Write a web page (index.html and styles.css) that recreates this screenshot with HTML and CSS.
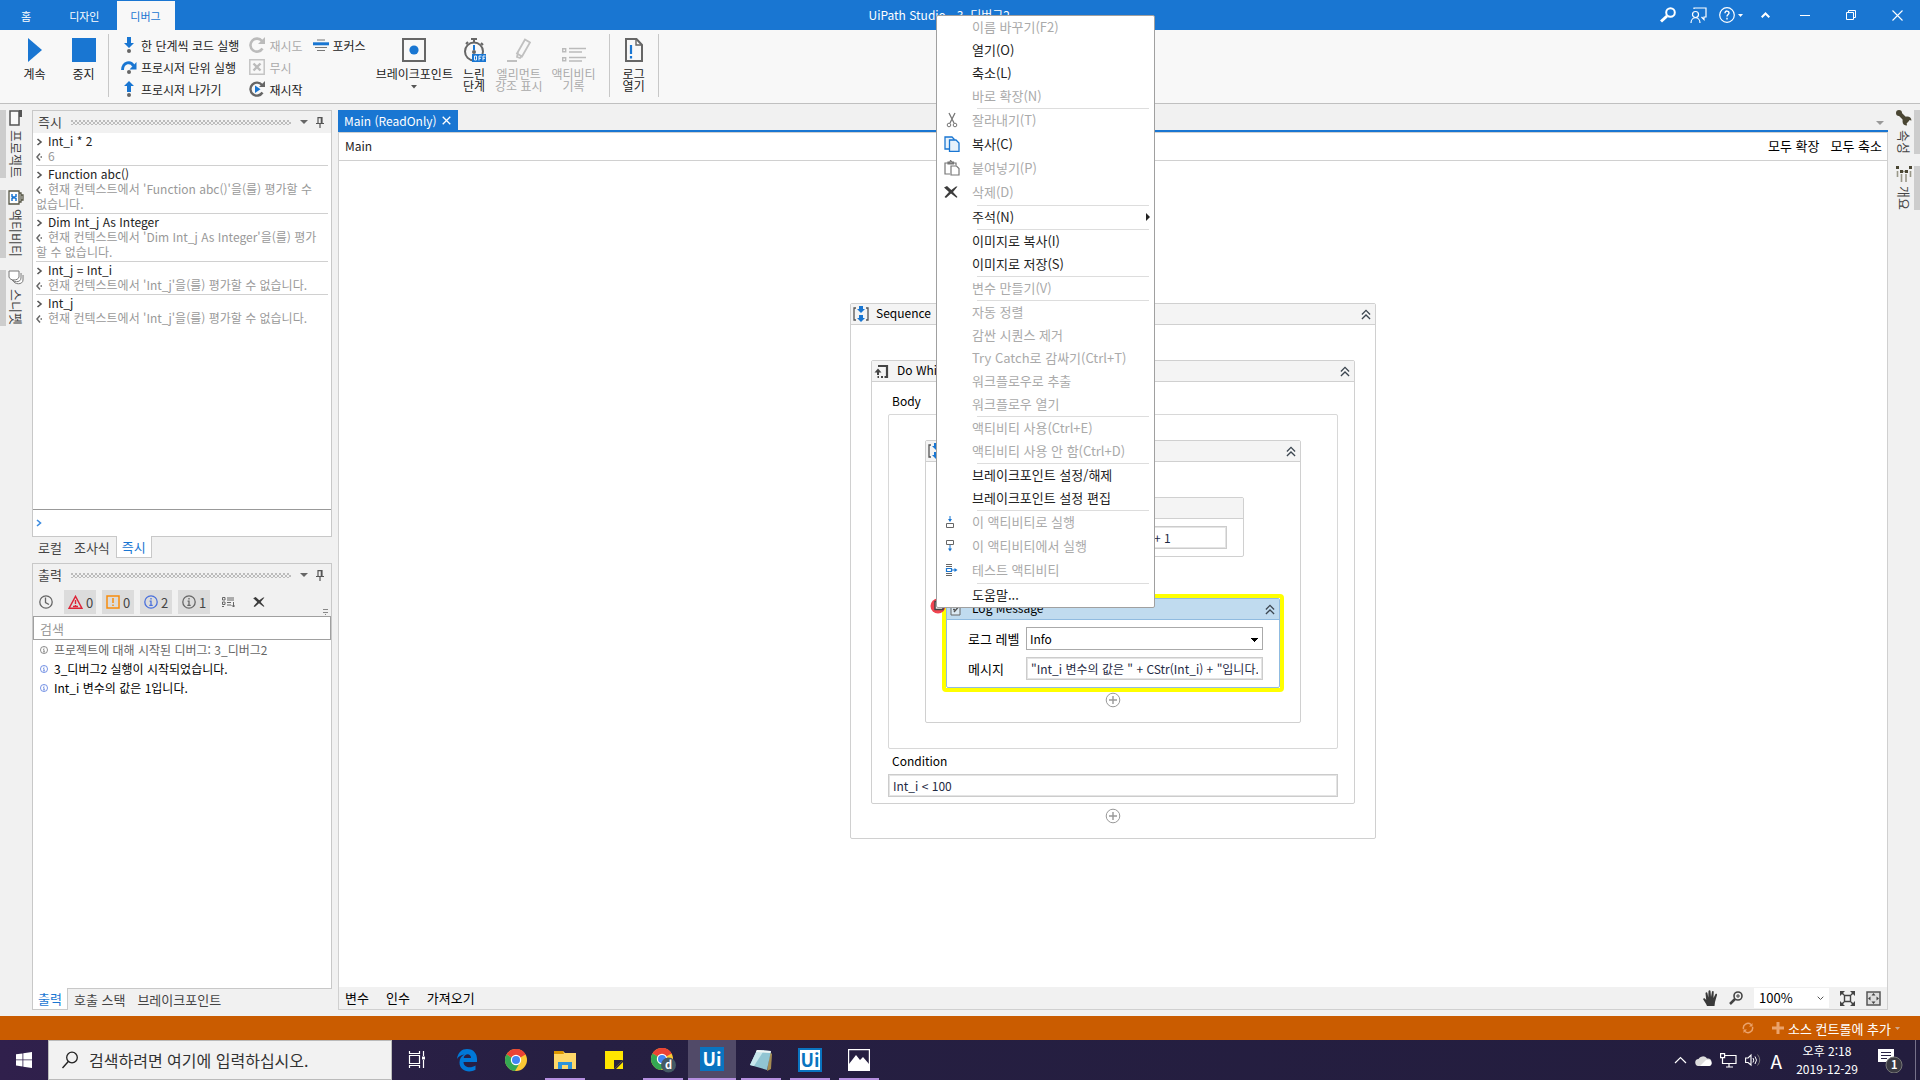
FILE: index.html
```html
<!DOCTYPE html>
<html lang="ko">
<head>
    <meta charset="UTF-8">
    <meta name="viewport" content="width=device-width, initial-scale=1.0">
    <title>UiPath Studio - 3_디버그2</title>
    <link rel="stylesheet" href="styles.css">
</head>
<body>
    <!-- Shared icons -->
    <svg class="defs" width="0" height="0">
        <symbol id="i-collapse" viewBox="0 0 11 12"><path d="M1 6l4.500-4.500L10 6M1 11l4.500-4.500L10 11" fill="none" stroke="#3c4650" stroke-width="1.400"/></symbol>
        <symbol id="i-add" viewBox="0 0 16 16"><circle cx="8" cy="8" r="6.800" fill="#fff" stroke="#999"/><path d="M8 4v8M4 8h8" stroke="#999" stroke-width="1.400"/></symbol>
        <symbol id="i-seq" viewBox="0 0 16 16"><path d="M3 2H1v12h2M13 2h2v12h-2" fill="none" stroke="#555" stroke-width="1.300"/><path d="M6 0h4v3h2L8 7 4 3h2zM6 9h4v3h2l-4 4-4-4h2z" fill="#1976d2"/></symbol>
        <symbol id="i-pin" viewBox="0 0 8 11"><path d="M2 6V.7h4V6M5.300 1v5M0 6.500h8M4 6.500V11" fill="none" stroke="#555" stroke-width="1.200"/></symbol>
        <symbol id="i-in" viewBox="0 0 6 8"><path d="M1 1l3.500 3L1 7" fill="none" stroke="currentColor" stroke-width="1.600"/></symbol>
        <symbol id="i-out" viewBox="0 0 7 8"><path d="M4 .5L1 4l3 3.500M6 4H4.500" fill="none" stroke="#666" stroke-width="1.500"/></symbol>
        <symbol id="i-info" viewBox="0 0 14 14"><circle cx="7" cy="7" r="6.200" fill="none" stroke="currentColor" stroke-width="1.300"/><path d="M7 3v1.600M5.600 6.200H7V10M5.300 10.300h3.400" fill="none" stroke="currentColor" stroke-width="1.300"/></symbol>
        <symbol id="i-x" viewBox="0 0 14 12"><path d="M0 1.500L3 0l4.300 4L12 .5h1.500L9 6l4.500 5-1 .8L7 7.500 2 12l-1.500-1L5 6z" fill="#3c3c3c"/></symbol>
        <symbol id="i-chrome" viewBox="0 0 24 24"><circle cx="12" cy="12" r="11" fill="#fcc934"/><path d="M12 12L2.470 6.500A11 11 0 0 1 21.530 6.500z" fill="#ea4335"/><path d="M12 1a11 11 0 0 1 9.800 6H12z" fill="#ea4335"/><path d="M2.470 6.500A11 11 0 0 0 11 23l5-8.500-4-2.500z" fill="#34a853"/><circle cx="12" cy="12" r="5.200" fill="#fff"/><circle cx="12" cy="12" r="4" fill="#4285f4"/></symbol>
    </svg>

    <div class="app">
        <header class="titlebar">
            <nav class="tabs">
                <button class="tab">홈</button>
                <button class="tab">디자인</button>
                <button class="tab active">디버그</button>
            </nav>
            <div class="window-title">UiPath Studio - 3_디버그2</div>
            <div class="title-buttons">
                <button aria-label="검색"><svg width="16" height="16" viewBox="0 0 16 16"><circle cx="10.500" cy="5.500" r="4.300" fill="none" stroke="#fff" stroke-width="2"/><path d="M7 9l-6 5.500" stroke="#fff" stroke-width="3"/></svg></button>
                <button aria-label="피드백"><svg width="17" height="17" viewBox="0 0 17 17"><path d="M4 2V1h12v9h-2v2.500L11.500 10M1 16c0-7 9-7 9 0" fill="none" stroke="#fff" stroke-width="1.200"/><circle cx="5.500" cy="7.500" r="3" fill="none" stroke="#fff" stroke-width="1.200"/></svg></button>
                <button class="help" aria-label="도움말"><svg width="25" height="16" viewBox="0 0 25 16"><circle cx="8" cy="8" r="7.300" fill="none" stroke="#fff" stroke-width="1.200"/><path d="M6 6.200c0-3 4-2.600 4-.2C10 7.600 8 7.600 8 9.500M8 10.800v1.600" fill="none" stroke="#fff" stroke-width="1.400"/><path d="M19 7h5l-2.500 3z" fill="#fff"/></svg></button>
                <button class="fold" aria-label="리본 접기"><svg width="9" height="6" viewBox="0 0 9 6"><path d="M.7 5.300l3.800-3.800 3.800 3.800" fill="none" stroke="#fff" stroke-width="2"/></svg></button>
                <button class="win" aria-label="최소화"><svg width="10" height="10" viewBox="0 0 10 10"><path d="M0 5.500h10" stroke="#fff"/></svg></button>
                <button class="win" aria-label="이전 크기로"><svg width="10" height="10" viewBox="0 0 10 10"><path d="M.5 2.500h7v7h-7zM2.500 2V.5h7v7H8" fill="none" stroke="#fff"/></svg></button>
                <button class="win" aria-label="닫기"><svg width="11" height="11" viewBox="0 0 11 11"><path d="M.5.5l10 10M10.500.5l-10 10" stroke="#fff" stroke-width="1.100"/></svg></button>
            </div>
        </header>

        <section class="ribbon">
            <div class="group run">
                <button class="big"><svg width="18" height="24" viewBox="0 0 18 24"><path d="M2 0l14 12L2 24z" fill="#1976d2"/></svg><span>계속</span></button>
                <button class="big"><svg width="24" height="24" viewBox="0 0 24 24"><path d="M0 0h24v24H0z" fill="#1976d2"/></svg><span>중지</span></button>
            </div>
            <div class="group steps">
                <div class="stack">
                    <button><svg width="16" height="16" viewBox="0 0 16 16"><path d="M6 0h4v6h3l-5 5-5-5h3z" fill="#1976d2"/><circle cx="8" cy="14" r="2" fill="#666"/></svg>한 단계씩 코드 실행</button>
                    <button><svg width="16" height="16" viewBox="0 0 16 16"><path d="M1.500 11C2 2.500 10 2 12.500 7" fill="none" stroke="#1976d2" stroke-width="2.800"/><path d="M15.500 3v7.500H8.500z" fill="#1976d2"/><circle cx="8" cy="13" r="2" fill="#666"/></svg>프로시저 단위 실행</button>
                    <button><svg width="16" height="16" viewBox="0 0 16 16"><path d="M6 11h4V5h3L8 0 3 5h3z" fill="#1976d2"/><circle cx="8" cy="14" r="2" fill="#666"/></svg>프로시저 나가기</button>
                </div>
                <div class="stack">
                    <button disabled><svg width="16" height="16" viewBox="0 0 16 16"><path d="M13.500 11.500A6.500 6.500 0 1 1 13 4" fill="none" stroke="#bbb" stroke-width="2.600"/><path d="M16 0v7H9z" fill="#bbb"/></svg>재시도</button>
                    <button disabled><svg width="16" height="16" viewBox="0 0 16 16"><path d="M.8.8h14.400v14.400H.8z" fill="none" stroke="#c4c4c4" stroke-width="1.500"/><path d="M4.500 4.500l7 7M11.500 4.500l-7 7" stroke="#bbb" stroke-width="2.400"/></svg>무시</button>
                    <button><svg width="16" height="16" viewBox="0 0 16 16"><path d="M13.500 11.500A6.500 6.500 0 1 1 13 4" fill="none" stroke="#666" stroke-width="2.400"/><path d="M16 0v6h-6z" fill="#666"/><path d="M6 4.500l5.500 3.800L6 12z" fill="#1976d2"/></svg>재시작</button>
                </div>
                <div class="stack">
                    <button><svg width="16" height="12" viewBox="0 0 16 12"><path d="M4 1h8M2 8.500h12M4 11.500h8" stroke="#777"/><path d="M0 4.800h16" stroke="#1976d2" stroke-width="3"/></svg>포커스</button>
                </div>
            </div>
            <div class="group tools">
                <button class="big"><svg width="24" height="24" viewBox="0 0 24 24"><path d="M1 1h22v22H1z" fill="none" stroke="#666" stroke-width="2"/><circle cx="12" cy="12" r="4.600" fill="#1976d2"/></svg><span>브레이크포인트</span><svg class="drop" width="6" height="4" viewBox="0 0 6 4"><path d="M0 0h6L3 3.500z" fill="#555"/></svg></button>
                <button class="big"><svg width="24" height="24" viewBox="0 0 24 24"><circle cx="12" cy="13.500" r="9" fill="none" stroke="#666" stroke-width="2"/><path d="M9 1h6M12 1v4M19 5l2 2M4 6l2-2" stroke="#666" stroke-width="2"/><path d="M12 7v5" stroke="#1976d2" stroke-width="2"/><circle cx="12" cy="14" r="2" fill="#666"/><path d="M10 16h14v8H10z" fill="#1976d2"/><path d="M12.500 18h2v4h-2zM17 22.500V18h2.500M17 20.300h2M21 22.500V18h2.500M21 20.300h2" fill="none" stroke="#fff" stroke-width=".9"/></svg><span>느린<br>단계</span></button>
                <button class="big" disabled><svg width="24" height="24" viewBox="0 0 24 24"><path d="M18 1.500l5 3-8 14-5-3zM11 14l-1 5 3 1 3-3M0 23h10" fill="none" stroke="#c0c0c0" stroke-width="1.800"/></svg><span>엘리먼트<br>강조 표시</span></button>
                <button class="big" disabled><svg width="24" height="24" viewBox="0 0 24 24"><path d="M.7 10.700h3v3h-3zM.7 19.700h3v3h-3z" fill="none" stroke="#bbb" stroke-width="1.400"/><path d="M7 10.500h17M7 14h13M7 19.500h17M7 23h13" stroke="#bbb" stroke-width="1.500"/></svg><span>액티비티<br>기록</span></button>
            </div>
            <div class="group logs">
                <button class="big"><svg width="18" height="24" viewBox="0 0 18 24"><path d="M1 1h10.500L17 7v16H1z" fill="none" stroke="#666" stroke-width="2"/><path d="M11 1v6h6" fill="none" stroke="#666" stroke-width="1.400"/><path d="M6 7v9M6 18v2.500" stroke="#1976d2" stroke-width="2.200"/></svg><span>로그<br>열기</span></button>
            </div>
        </section>

        <main class="workspace">
            <nav class="rail">
                <button class="rail-tab"><svg width="14" height="16" viewBox="0 0 14 16"><path d="M1 1h9v14H1z" fill="#fafafa" stroke="#555" stroke-width="1.500"/><path d="M10 0h3v7h-3z" fill="#555"/></svg>프로젝트</button>
                <button class="rail-tab"><svg width="16" height="15" viewBox="0 0 16 15"><path d="M1 1h10v13H1zM11 3h2v9h-2M13 5h2v5h-2" fill="#fff" stroke="#555544" stroke-width="1.300"/><path d="M4 4v2.500l4 2V11M8 4v2.500l-4 2V11" fill="none" stroke="#1976d2" stroke-width="1.500"/></svg>액티비티</button>
                <button class="rail-tab short"><svg width="16" height="15" viewBox="0 0 16 15"><path d="M5 10c1 5 10 5 10 0V5M3 8c1 5 10 5 10 0V3" fill="#fff" stroke="#777"/><path d="M1 1h10v6c-1 4-9 4-10 0z" fill="#fff" stroke="#777"/></svg>스니펫</button>
            </nav>

            <aside class="side">
                <section class="panel immediate">
                    <div class="panel-head"><h2>즉시</h2><span class="grip"></span><button class="caret" aria-label="옵션"></button><button aria-label="고정"><svg width="8" height="11"><use href="#i-pin"/></svg></button></div>
                    <div class="entries">
                        <div class="entry"><p><svg width="6" height="8"><use href="#i-in"/></svg>Int_i * 2</p><p class="result"><svg width="7" height="8"><use href="#i-out"/></svg>6</p></div>
                        <div class="entry"><p><svg width="6" height="8"><use href="#i-in"/></svg>Function abc()</p><p class="result"><svg width="7" height="8"><use href="#i-out"/></svg>현재 컨텍스트에서 'Function abc()'을(를) 평가할 수<br>없습니다.</p></div>
                        <div class="entry"><p><svg width="6" height="8"><use href="#i-in"/></svg>Dim Int_j As Integer</p><p class="result"><svg width="7" height="8"><use href="#i-out"/></svg>현재 컨텍스트에서 'Dim Int_j As Integer'을(를) 평가<br>할 수 없습니다.</p></div>
                        <div class="entry"><p><svg width="6" height="8"><use href="#i-in"/></svg>Int_j = Int_i</p><p class="result"><svg width="7" height="8"><use href="#i-out"/></svg>현재 컨텍스트에서 'Int_j'을(를) 평가할 수 없습니다.</p></div>
                        <div class="entry"><p><svg width="6" height="8"><use href="#i-in"/></svg>Int_j</p><p class="result"><svg width="7" height="8"><use href="#i-out"/></svg>현재 컨텍스트에서 'Int_j'을(를) 평가할 수 없습니다.</p></div>
                    </div>
                    <label class="prompt"><svg width="6" height="8"><use href="#i-in"/></svg><input type="text" aria-label="식 입력"></label>
                </section>
                <nav class="panel-tabs">
                    <button>로컬</button><button>조사식</button><button class="active">즉시</button>
                </nav>

                <section class="panel output">
                    <div class="panel-head"><h2>출력</h2><span class="grip"></span><button class="caret" aria-label="옵션"></button><button aria-label="고정"><svg width="8" height="11"><use href="#i-pin"/></svg></button></div>
                    <div class="filters">
                        <button class="plain" aria-label="타임스탬프"><svg width="14" height="14" viewBox="0 0 14 14"><circle cx="7" cy="7" r="6.200" fill="none" stroke="#666" stroke-width="1.300"/><path d="M6.500 2.500V7.500L10 9.500" fill="none" stroke="#666" stroke-width="1.300"/></svg></button>
                        <button class="count"><svg width="15" height="14" viewBox="0 0 15 14"><path d="M7.500 1.300l6.500 12H1z" fill="none" stroke="#dd2438" stroke-width="1.400"/><path d="M7.500 5v4M7.500 10v2M5 11.500h5" stroke="#dd2438" stroke-width="1.400"/></svg>0</button>
                        <button class="count"><svg width="14" height="14" viewBox="0 0 14 14"><path d="M1 1h12v12H1z" fill="none" stroke="#f78c0c" stroke-width="1.500"/><path d="M7 3v5M7 9.500V11" stroke="#f78c0c" stroke-width="1.500"/></svg>0</button>
                        <button class="count blue"><svg width="14" height="14"><use href="#i-info"/></svg><span>2</span></button>
                        <button class="count gray"><svg width="14" height="14"><use href="#i-info"/></svg><span>1</span></button>
                        <button class="plain tail" aria-label="줄 바꿈"><svg width="13" height="11" viewBox="0 0 13 11"><path d="M.5.500h2.500v2.500H.5zM.5 5h2.500v2.500H.5zM5 1h7M5 3h7M5 5.500h4M5 8h4M11.500 5v5M9.500 8l2 2 2-2M0 9.500h2" fill="none" stroke="#666"/></svg></button>
                        <button class="plain clear" aria-label="모두 지우기"><svg width="12" height="10"><use href="#i-x"/></svg></button>
                        <i class="overflow"></i>
                    </div>
                    <input class="search" type="text" placeholder="검색" aria-label="출력 검색">
                    <ul class="log">
                        <li class="trace"><svg width="8" height="8"><use href="#i-info"/></svg>프로젝트에 대해 시작된 디버그: 3_디버그2</li>
                        <li><svg width="8" height="8"><use href="#i-info"/></svg><span>3_디버그2 실행이 시작되었습니다.</span></li>
                        <li><svg width="8" height="8"><use href="#i-info"/></svg><span>Int_i 변수의 값은 1입니다.</span></li>
                    </ul>
                </section>
                <nav class="panel-tabs">
                    <button class="active">출력</button><button>호출 스택</button><button>브레이크포인트</button>
                </nav>
            </aside>

            <section class="document">
                <div class="doc-tabs">
                    <button class="doc-tab">Main (ReadOnly)<svg width="9" height="9" viewBox="0 0 9 9"><path d="M.7.7l7.600 7.600M8.300.7L.7 8.300" stroke="#fff" stroke-width="1.300"/></svg></button>
                    <button class="caret" aria-label="열린 문서"></button>
                </div>
                <div class="breadcrumb"><a href="#">Main</a><span class="right"><button>모두 확장</button><button>모두 축소</button></span></div>

                <div class="canvas">
                    <article class="activity sequence">
                        <header><svg width="16" height="16"><use href="#i-seq"/></svg><h3>Sequence</h3><button aria-label="축소"><svg width="10" height="11"><use href="#i-collapse"/></svg></button></header>
                        <div class="outer-body">
                            <article class="activity dowhile">
                                <header><svg width="16" height="16" viewBox="0 0 16 16"><path d="M4 3h9v11h-2.500M9 14H7M5 14H3.500" fill="none" stroke="#444" stroke-width="2.200"/><path d="M4 12V8" stroke="#444" stroke-width="2"/><path d="M.5 9.500L4 5.500l3.500 4z" fill="#444"/></svg><h3>Do While</h3><button aria-label="축소"><svg width="10" height="11"><use href="#i-collapse"/></svg></button></header>
                                <div class="dowhile-body">
                                    <p class="caption">Body</p>
                                    <div class="drop-box">
                                        <article class="activity">
                                            <header><svg width="16" height="16"><use href="#i-seq"/></svg><h3></h3><button aria-label="축소"><svg width="10" height="11"><use href="#i-collapse"/></svg></button></header>
                                            <div class="inner-body">
                                                <article class="activity assign">
                                                    <header></header>
                                                    <div class="assign-row"><input type="text" aria-label="대상"><input type="text" value="+ 1" aria-label="값"></div>
                                                </article>
                                                <div class="current">
                                                    <svg class="breakpoint" width="16" height="16" viewBox="0 0 16 16"><circle cx="8" cy="8" r="7.500" fill="#f04450"/><path d="M5 3.500h8v8H5z" fill="#eee" stroke="#444" stroke-width="1.500"/></svg>
                                                    <article class="activity log-message">
                                                        <header><svg width="14" height="14" viewBox="0 0 14 14"><path d="M11 6v7H2V2h6" fill="#dbe9f3" stroke="#666"/><path d="M5 10l7-8M4 5h3M4 7.500h2" stroke="#555" stroke-width="1.400"/></svg><h3>Log Message</h3><button aria-label="축소"><svg width="10" height="11"><use href="#i-collapse"/></svg></button></header>
                                                        <div class="fields">
                                                            <label for="level">로그 레벨</label>
                                                            <select id="level"><option>Info</option></select>
                                                            <label for="message">메시지</label>
                                                            <input id="message" type="text" value="&quot;Int_i 변수의 값은 &quot; + CStr(Int_i) + &quot;입니다.&quot;">
                                                        </div>
                                                    </article>
                                                </div>
                                                <button class="add" aria-label="액티비티 추가"><svg width="16" height="16"><use href="#i-add"/></svg></button>
                                            </div>
                                        </article>
                                    </div>
                                    <label class="caption condition" for="condition">Condition</label>
                                    <input id="condition" type="text" value="Int_i &lt; 100">
                                </div>
                            </article>
                            <button class="add" aria-label="액티비티 추가"><svg width="16" height="16"><use href="#i-add"/></svg></button>
                        </div>
                    </article>
                </div>

                <div class="doc-bar">
                    <button>변수</button><button>인수</button><button>가져오기</button>
                    <div class="zoom">
                        <button aria-label="이동"><svg width="15" height="16" viewBox="0 0 15 16"><path d="M4 16c-1-3-3-5-4-7 1-1.300 2-.5 3.200 1L2.500 3c.8-1.200 1.800-.6 2 .4l.8 4L5.500 1C6 0 7.300 0 7.500 1L8 7l1-5.500c.5-1 1.800-.6 1.700.5L10.500 8 12.500 4c.9-.7 1.700 0 1.500 1l-2 7-.5 4z" fill="#3a3a3a"/></svg></button>
                        <button aria-label="확대"><svg width="14" height="14" viewBox="0 0 14 14"><circle cx="9" cy="5" r="4" fill="none" stroke="#444" stroke-width="1.600"/><path d="M9 3v4M7 5h4" stroke="#444"/><path d="M6 8l-5 5" stroke="#444" stroke-width="2.500"/></svg></button>
                        <label class="scale"><select aria-label="배율"><option>100%</option></select><svg width="7" height="5" viewBox="0 0 7 5"><path d="M.7.7l2.800 2.800L6.300.7" fill="none" stroke="#555"/></svg></label>
                        <button aria-label="화면에 맞춤"><svg width="15" height="15" viewBox="0 0 15 15"><path d="M4.500 4.500h6v6h-6z" fill="none" stroke="#444" stroke-width="1.400"/><path d="M0 0h5L0 5zM15 0v5l-5-5zM0 15v-5l5 5zM15 15h-5l5-5z" fill="#444"/><path d="M1 1l3 3M14 1l-3 3M1 14l3-3M14 14l-3-3" stroke="#444" stroke-width="1.500"/></svg></button>
                        <button aria-label="개요"><svg width="15" height="15" viewBox="0 0 15 15"><path d="M1 1h13v13H1z" fill="#ddd" stroke="#555" stroke-width="1.500"/><path d="M7.500 2l2 2.500h-4zM7.500 13l2-2.500h-4zM2 7.500l2.500-2v4zM13 7.500l-2.500-2v4z" fill="#444"/></svg></button>
                    </div>
                </div>
            </section>

            <nav class="rail rail-right">
                <button class="rail-tab"><svg width="16" height="16" viewBox="0 0 16 16"><path d="M2.500 2.500L12 12" stroke="#4a4633" stroke-width="4"/><circle cx="3" cy="3" r="3" fill="#4a4633"/><path d="M15.500 10.500A4.500 4.500 0 1 0 11 15.500l-.5-3 2.500-2.500z" fill="#4a4633"/></svg>속성</button>
                <button class="rail-tab"><svg width="16" height="16" viewBox="0 0 16 16"><path d="M0 0h3v3H0zM13 0h3v3h-3zM4 4h3v3H4zM9 4h3v3H9z" fill="#4a4633"/><path d="M1.500 5v6M5.500 8v8M10 8v8M14.500 5v6M7 5.500h2" stroke="#999788" stroke-width="1.600"/></svg>개요</button>
            </nav>
        </main>

        <footer class="statusbar">
            <svg width="12" height="12" viewBox="0 0 12 12"><path d="M1.500 7A4.600 4.600 0 0 1 9 2.500M10.500 5A4.600 4.600 0 0 1 3 9.500" fill="none" stroke="#eba36c" stroke-width="1.500"/><path d="M10.500 1v3.500H7zM1.500 11V7.500H5z" fill="#eba36c"/></svg>
            <button><svg width="12" height="12" viewBox="0 0 12 12"><path d="M6 0v12M0 6h12" stroke="#eba36c" stroke-width="3"/></svg>소스 컨트롤에 추가<svg class="drop" width="5" height="3" viewBox="0 0 5 3"><path d="M0 0h5L2.500 3z" fill="#d0a88c"/></svg></button>
        </footer>

        <footer class="taskbar">
            <button class="start" aria-label="시작"><svg width="16" height="16" viewBox="0 0 16 16"><path d="M0 2.300l6.500-.9v6.100H0zM7.300 1.300L16 0v7.500H7.300zM0 8.300h6.500v6.200L0 13.600zM7.300 8.300H16V16l-8.700-1.300z" fill="#fff"/></svg></button>
            <label class="task-search"><svg width="18" height="18" viewBox="0 0 18 18"><circle cx="11" cy="6.500" r="5.300" fill="none" stroke="#222" stroke-width="1.300"/><path d="M7.300 10.500L1.500 17" stroke="#222" stroke-width="1.400"/></svg><input type="text" placeholder="검색하려면 여기에 입력하십시오." aria-label="검색"></label>
            <div class="apps">
                <button class="app-icon" aria-label="작업 보기"><svg width="18" height="18" viewBox="0 0 18 18"><path d="M1.500 4.500h10v8h-10zM1.500 0v2.500h10V0M1.500 17v-2.500h10V17M15.500 0v5M15.500 9v8" fill="none" stroke="#fff" stroke-width="1.200"/><path d="M14 5.500h3v3h-3z" fill="#fff"/></svg></button>
                <button class="app-icon" aria-label="Edge"><svg width="22" height="24" viewBox="0 0 22 24"><path d="M1 11C2 4 6 1 11 1c7 0 10 5 10 10v3H7.500c.3 6 7.500 6.500 12 3.500v4.300C12 26 3.500 22 3.500 14.500c0-4 2-6.500 5-8C5 7 2.500 8.500 1 11zM7.700 10H15c0-5-6.500-5-7.300 0z" fill="#0078d7"/></svg></button>
                <button class="app-icon" aria-label="Chrome"><svg width="24" height="24"><use href="#i-chrome"/></svg></button>
                <button class="app-icon open" aria-label="파일 탐색기"><svg width="22" height="18" viewBox="0 0 22 18"><path d="M0 0h9l2 2h11v16H0z" fill="#ffd868"/><path d="M0 0h9l1 3H0z" fill="#dd9700"/><path d="M4 18v-7h14v7h-4v-4H8v4z" fill="#2e93d9"/></svg></button>
                <button class="app-icon" aria-label="스티커 메모"><svg width="18" height="18" viewBox="0 0 18 18"><path d="M0 0h18v9l-9 9H0z" fill="#ffe600"/><path d="M9 18V9h9z" fill="#2b2540"/><path d="M11 18h7v-7z" fill="#ffe600"/></svg></button>
                <button class="app-icon open" aria-label="Chrome d"><svg width="28" height="26" viewBox="0 0 28 26"><use href="#i-chrome" x="1" y="0" width="24" height="24"/><circle cx="19.500" cy="18" r="7.500" fill="#455a64"/><text class="badge-text" x="16" y="22">d</text></svg></button>
                <button class="app-icon current-app"><span class="ui-logo">Ui</span></button>
                <button class="app-icon open" aria-label="메모장"><svg width="23" height="22" viewBox="0 0 23 22"><path d="M20 3l2 2-1 15-4 2z" fill="#a58c52"/><path d="M7 1l14 1-4 19-17-5z" fill="#91c5d3"/><path d="M7 1l7 .5L4 17l-4-1z" fill="#c9e7ed"/><path d="M7 1l14 1-.5 2L6 3z" fill="#eef4f4"/></svg></button>
                <button class="app-icon open"><span class="ui-logo light">Ui</span></button>
                <button class="app-icon open" aria-label="사진"><svg width="22" height="22" viewBox="0 0 22 22"><path d="M.6.6h20.800v20.800H.6z" fill="none" stroke="#fff" stroke-width="1.200"/><path d="M1 15l7-9 4 5 3-3 6 7v6.500H1z" fill="#fff"/></svg></button>
            </div>
            <div class="tray">
                <svg width="13" height="8" viewBox="0 0 13 8"><path d="M1 7l5.500-5.500L12 7" fill="none" stroke="#fff" stroke-width="1.200"/></svg>
                <svg width="17" height="11" viewBox="0 0 17 11"><path d="M4 11a3.500 3.500 0 0 1-.5-7A5 5 0 0 1 12 3.500a3.800 3.800 0 0 1 1.500 7.500z" fill="#ddd"/><path d="M5 11l6-6c3-1 5.500.5 5.500 3.500 0 1.500-1 2.500-2.500 2.500z" fill="#fff"/></svg>
                <svg width="17" height="15" viewBox="0 0 17 15"><path d="M5 2.500h11v8H4M9 10.500v3M6 14h7M.6.6h4v4h-4zM2.500 5v5.500H5" fill="none" stroke="#fff" stroke-width="1.200"/></svg>
                <svg width="17" height="14" viewBox="0 0 17 14"><path d="M.6 5h2.500L6 2v10L3 9.500H.6z" fill="none" stroke="#fff" stroke-width="1.100"/><path d="M8 5q1.500 2 0 4.500M10 3.500q3 3.500 0 7.500" fill="none" stroke="#fff"/><path d="M12.500 1.500q4.500 5.500 0 11" fill="none" stroke="#777"/></svg>
                <span class="ime">A</span>
                <time class="clock" datetime="2019-12-29T14:18">오후 2:18<br>2019-12-29</time>
                <svg class="notice" width="25" height="26" viewBox="0 0 25 26"><path d="M0 2h16v13h-3v3.500L9.500 15H0z" fill="#fff"/><path d="M3 5.500h10M3 8.500h10M3 11.500h6" stroke="#292345"/><circle cx="16" cy="18" r="8" fill="#3a3a42" stroke="#777"/><text class="badge-text notice-count" x="13" y="22">1</text></svg>
            </div>
        </footer>
    </div>

    <!-- Context menu -->
    <div class="menu" role="menu">
        <button disabled>이름 바꾸기(F2)</button>
        <button>열기(O)</button>
        <button>축소(L)</button>
        <button disabled>바로 확장(N)</button>
        <hr>
        <button class="tall" disabled><svg width="16" height="16" viewBox="0 0 16 16"><path d="M5 1l5 10M11 1L6 11" stroke="#777" stroke-width="1.300"/><circle cx="5" cy="13" r="1.800" fill="none" stroke="#777"/><circle cx="11" cy="13" r="1.800" fill="none" stroke="#777"/></svg>잘라내기(T)</button>
        <button class="tall"><svg width="16" height="16" viewBox="0 0 16 16"><path d="M5 13H1V1h7l2 2v1" fill="#e8f2fb" stroke="#1976d2" stroke-width="1.300"/><path d="M5.500 4h6.500l3 3v8.300H5.500z" fill="#e8f2fb" stroke="#1976d2" stroke-width="1.300"/></svg>복사(C)</button>
        <button class="tall" disabled><svg width="16" height="16" viewBox="0 0 16 16"><path d="M6 14H1V3h11v2.500M4 4V2h2l.5-1.500L8 2h1.500v2z" fill="none" stroke="#777" stroke-width="1.200"/><path d="M7 6h5.500L15 8.500V15H7z" fill="#fff" stroke="#777" stroke-width="1.200"/></svg>붙여넣기(P)</button>
        <button class="tall" disabled><svg width="14" height="12"><use href="#i-x"/></svg>삭제(D)</button>
        <hr>
        <button class="sub">주석(N)</button>
        <hr>
        <button>이미지로 복사(I)</button>
        <button>이미지로 저장(S)</button>
        <hr>
        <button disabled>변수 만들기(V)</button>
        <hr>
        <button disabled>자동 정렬</button>
        <button disabled>감싼 시퀀스 제거</button>
        <button disabled>Try Catch로 감싸기(Ctrl+T)</button>
        <button disabled>워크플로우로 추출</button>
        <button disabled>워크플로우 열기</button>
        <hr>
        <button disabled>액티비티 사용(Ctrl+E)</button>
        <button disabled>액티비티 사용 안 함(Ctrl+D)</button>
        <hr>
        <button>브레이크포인트 설정/해제</button>
        <button>브레이크포인트 설정 편집</button>
        <hr>
        <button class="tall" disabled><svg width="12" height="12" viewBox="0 0 12 12"><path d="M2.500 7.500h7v4h-7z" fill="none" stroke="#666"/><path d="M6 0v4" stroke="#1976d2"/><path d="M4 3h4L6 6z" fill="#1976d2"/></svg>이 액티비티로 실행</button>
        <button class="tall" disabled><svg width="12" height="12" viewBox="0 0 12 12"><path d="M2.500.5h7v4h-7z" fill="none" stroke="#666"/><path d="M6 5v4" stroke="#1976d2"/><path d="M4 8.500h4L6 11.500z" fill="#1976d2"/></svg>이 액티비티에서 실행</button>
        <button class="tall" disabled><svg width="14" height="12" viewBox="0 0 14 12"><path d="M2 .5h6M2 2.500h6M2 9.500h6M2 11.500h6" stroke="#666"/><path d="M2.500 4.500h5v3h-5zM8 6h3" fill="none" stroke="#1976d2" stroke-width="1.200"/><path d="M10.500 4l3 2-3 2z" fill="#1976d2"/></svg>테스트 액티비티</button>
        <hr>
        <button>도움말...</button>
    </div>
</body>
</html>
```

FILE: styles.css
```css
* {
    box-sizing: border-box;
}

body {
    margin: 0;
    font-family: "Noto Sans CJK KR", sans-serif;
    font-size: 12px;
    color: #222;
    background-color: #f1f1f1;
    overflow: hidden;
}

button, input, select {
    font: inherit;
    color: inherit;
    margin: 0;
    padding: 0;
    border: none;
    background: none;
    white-space: nowrap;
}

h2, h3, p, ul {
    margin: 0;
    padding: 0;
    font-size: inherit;
    font-weight: normal;
    list-style: none;
}

a {
    color: inherit;
    text-decoration: none;
}

svg {
    flex: none;
}

.defs {
    position: absolute;
}

.app {
    display: flex;
    flex-direction: column;
    height: 100vh;
}

/* Title bar */
.titlebar {
    display: flex;
    height: 30px;
    background-color: #1976d2;
    color: #fff;
}

.tabs {
    display: flex;
    padding-top: 1px;
}

.tab {
    padding: 0 17px;
    font-size: 11px;
}

.tab:first-child {
    padding: 0 21px;
}

.tab.active {
    width: 58px;
    padding: 0;
    background-color: #f8f8f8;
    color: #1976d2;
}

.window-title {
    flex: 1;
    padding-left: 52px;
    line-height: 30px;
    text-align: center;
}

.title-buttons {
    display: flex;
    align-items: center;
}

.title-buttons button {
    display: flex;
    justify-content: center;
    width: 31px;
}

.title-buttons .help,
.title-buttons .fold {
    width: 34px;
}

.title-buttons .win {
    width: 46px;
}

/* Ribbon */
.ribbon {
    display: flex;
    height: 74px;
    padding: 4px 0 6px;
    background-color: #f8f8f8;
    border-bottom: 1px solid #c0c0c0;
}

.group {
    display: flex;
    border-right: 1px solid #c8c8c8;
}

.big {
    display: flex;
    flex-direction: column;
    align-items: center;
    padding-top: 4px;
    line-height: 12px;
}

.big span {
    margin-top: 6px;
}

.drop {
    margin-top: 5px;
}

.run {
    width: 109px;
    padding-left: 10px;
}

.run .big {
    width: 49px;
}

.steps {
    gap: 10px;
    padding-left: 12px;
    border: none;
}

.stack button {
    display: flex;
    align-items: center;
    gap: 4px;
    height: 22px;
}

.ribbon button:disabled {
    color: #aaa;
}

.tools {
    gap: 9px;
    padding: 0 13px 0 10px;
}

.logs {
    width: 49px;
    justify-content: center;
}

/* Workspace */
.workspace {
    display: flex;
    flex: 1;
    min-height: 0;
    padding: 6px 0;
}

.rail {
    display: flex;
    flex-direction: column;
    gap: 12px;
    width: 32px;
    font-size: 13px;
}

.rail-tab {
    display: flex;
    align-items: center;
    gap: 4px;
    width: 26px;
    height: 68px;
    border-left: 6px solid #cdcdcd;
    color: #444;
    line-height: 20px;
    writing-mode: vertical-rl;
    text-orientation: sideways;
}

.rail-tab.short {
    height: 56px;
}

.rail-right .rail-tab {
    height: 44px;
    margin-left: 6px;
    border-left: none;
    border-right: 6px solid #cdcdcd;
}

.side {
    display: flex;
    flex-direction: column;
    width: 300px;
}

.panel {
    display: flex;
    flex-direction: column;
    border: 1px solid #c8c8c8;
    background-color: #fff;
}

.immediate {
    height: 427px;
}

.panel-head {
    display: flex;
    align-items: center;
    height: 22px;
    padding: 0 7px 0 5px;
    background-color: #f1f1f1;
    color: #444;
}

.panel-head h2 {
    font-size: 13px;
    line-height: 20px;
}

.grip {
    flex: 1;
    height: 5px;
    margin: 0 9px;
    background-image: linear-gradient(#aaa, #aaa), linear-gradient(#aaa, #aaa);
    background-size: 1px 1px;
    background-image: conic-gradient(#a4a4a4 90deg, transparent 0), conic-gradient(#a4a4a4 90deg, transparent 0);
    background-size: 4px 4px;
    background: radial-gradient(circle at 1px 1px, #999 0 1px, transparent 1px) 0 0 / 4px 4px, radial-gradient(circle at 1px 1px, #999 0 1px, transparent 1px) 2px 2px / 4px 4px;
    opacity: 0.6;
}

.caret {
    width: 8px;
    height: 4px;
    margin-right: 8px;
    background-color: #666;
    clip-path: polygon(0 0, 100% 0, 50% 100%);
}

.panel-head button:last-child {
    display: flex;
}

.entries {
    flex: 1;
    padding: 0 3px;
}

.entry {
    padding: 0 0 2px;
    border-bottom: 1px solid #d0d0d0;
    line-height: 15px;
    white-space: nowrap;
}

.entry:last-child {
    border-bottom: none;
}

.entry svg {
    width: 7px;
    margin-right: 5px;
    color: #555;
}

.result {
    color: #999;
}

.prompt {
    display: flex;
    align-items: center;
    gap: 6px;
    height: 27px;
    padding: 0 3px;
    border-top: 1px solid #999;
    color: #3c8ce0;
}

.panel-tabs {
    display: flex;
    height: 21px;
    font-size: 13px;
    color: #444;
}

.panel-tabs button {
    height: 21px;
    padding: 0 6px;
    line-height: 19px;
}

.panel-tabs .active {
    height: 22px;
    margin-top: -1px;
    padding: 0 5px;
    border: 1px solid #c8c8c8;
    border-top: none;
    background-color: #fff;
    color: #1976d2;
}

.output {
    flex: 1;
    margin-top: 5px;
}

.filters {
    display: flex;
    align-items: center;
    gap: 6px;
    height: 30px;
    padding: 2px 0 0 6px;
    background-color: #f1f1f1;
    font-size: 13px;
}

.filters button {
    display: flex;
    align-items: center;
}

.count {
    gap: 3px;
    height: 24px;
    width: 32px;
    padding-left: 4px;
    background-color: #dcdcdc;
    color: #444;
}

.filters .plain:first-child {
    margin-right: 5px;
}

.filters .tail {
    margin-left: 6px;
}

.filters .clear {
    margin-left: 12px;
}

.blue {
    color: #4a70dc;
}

.gray {
    color: #666;
}

.count span {
    color: #444;
}

.overflow {
    align-self: flex-end;
    width: 5px;
    height: 6px;
    margin: 0 3px 1px auto;
    background: linear-gradient(#888, #888) top / 5px 1px no-repeat, linear-gradient(#888, #888) 0 3px / 5px 1px no-repeat, linear-gradient(#888, #888) 2px 5px / 1px 1px no-repeat;
}

.search {
    height: 24px;
    padding: 0 6px;
    border: 1px solid #a0a0a0;
    font-size: 13px;
}

.search::placeholder {
    color: #999;
}

.log {
    padding-left: 7px;
}

.log li {
    display: flex;
    align-items: center;
    gap: 6px;
    height: 19px;
    color: #4a70dc;
    line-height: 17px;
}

.log .trace {
    color: #666;
}

.log span {
    color: #000;
}

/* Document */
.document {
    display: flex;
    flex-direction: column;
    flex: 1;
    margin-left: 6px;
}

.doc-tabs {
    display: flex;
    justify-content: space-between;
    align-items: center;
    height: 22px;
    border-bottom: 2px solid #1976d2;
}

.doc-tabs .caret {
    margin: 6px 4px 0;
    background-color: #999;
}

.doc-tab {
    display: flex;
    align-items: center;
    justify-content: space-between;
    width: 120px;
    height: 20px;
    padding: 0 7px 0 6px;
    background-color: #1976d2;
    color: #fff;
}

.breadcrumb {
    display: flex;
    justify-content: space-between;
    align-items: center;
    height: 29px;
    padding: 0 5px 2px 6px;
    border: 1px solid #d0d0d0;
    background-color: #fff;
}

.right {
    display: flex;
    gap: 11px;
    color: #000;
    font-size: 13px;
}

.canvas {
    display: flex;
    flex: 1;
    justify-content: center;
    align-items: flex-start;
    padding-top: 142px;
    border: 1px solid #d0d0d0;
    border-width: 0 1px;
    background-color: #fff;
    color: #000;
}

.activity {
    border: 1px solid #d0d0d0;
    border-radius: 2px;
    background-color: #fff;
}

.activity > header {
    display: flex;
    align-items: center;
    height: 21px;
    padding: 0 4px 0 2px;
    border-bottom: 1px solid #d0d0d0;
    background-color: #f4f4f4;
}

.activity h3 {
    flex: 1;
    margin-left: 7px;
    padding-bottom: 2px;
    line-height: 16px;
}

.activity header button, .add {
    display: flex;
}

.outer-body {
    display: flex;
    flex-direction: column;
    align-items: center;
    padding: 35px 20px 14px;
}

.outer-body > .add {
    margin-top: 4px;
}

.dowhile-body {
    display: flex;
    flex-direction: column;
    padding: 0 16px 6px;
}

.caption {
    height: 32px;
    padding: 7px 4px 0;
    line-height: 24px;
}

.caption.condition {
    height: 25px;
    padding-top: 0;
}

.drop-box {
    padding: 25px 36px;
    border: 1px solid #d8d8d8;
    border-radius: 2px;
}

.inner-body {
    display: flex;
    flex-direction: column;
    align-items: center;
    padding: 35px 16px 14px;
}

.activity input {
    height: 23px;
    padding: 0 4px;
    border: 1px solid #ccc;
    box-shadow: inset 0 0 0 1px #e4e4e4;
    color: #1f2a44;
}

.assign {
    width: 262px;
    margin-bottom: 37px;
}

.assign-row {
    display: grid;
    grid-template-columns: 1fr 78px;
    gap: 20px;
    align-items: center;
    height: 37px;
    padding: 0 16px;
}

.assign-row input {
    min-width: 0;
}

.current {
    position: relative;
    width: 342px;
    border: 4px solid #ff0;
    border-radius: 4px;
}

.breakpoint {
    position: absolute;
    left: -16px;
    top: 0;
}

.log-message {
    border-color: #90bbe0;
}

.log-message > header {
    border-color: #90bbe0;
    background-color: #c0dbef;
}

.log-message h3 {
    margin-left: 9px;
}

.fields {
    display: grid;
    grid-template-columns: 58px 1fr;
    align-items: center;
    gap: 7px 0;
    padding: 7px 16px 7px 21px;
}

.fields label {
    font-size: 13px;
}

.fields select {
    height: 23px;
    padding: 0 3px;
    border: 1px solid #aaa;
    appearance: none;
    background: linear-gradient(#000, #000) right 4px center / 7px 1px no-repeat, linear-gradient(#000, #000) right 5px top 11px / 5px 1px no-repeat, linear-gradient(#000, #000) right 6px top 12px / 3px 1px no-repeat, linear-gradient(#000, #000) right 7px top 13px / 1px 1px no-repeat;
}

.doc-bar {
    display: flex;
    align-items: center;
    gap: 17px;
    height: 23px;
    padding: 0 6px;
    border: 1px solid #d0d0d0;
    border-top: none;
    color: #000;
    font-size: 13px;
    line-height: 18px;
}

.zoom {
    display: flex;
    align-items: center;
    gap: 11px;
    margin-left: auto;
}

.zoom button {
    display: flex;
}

.scale {
    display: flex;
    align-items: center;
    width: 75px;
    height: 20px;
    padding: 0 5px;
    background-color: #fff;
}

.scale select {
    flex: 1;
    appearance: none;
}

/* Status bar */
.statusbar {
    display: flex;
    justify-content: flex-end;
    align-items: center;
    gap: 18px;
    height: 24px;
    padding-right: 20px;
    background-color: #ca5c00;
    color: #fff;
    font-size: 13px;
}

.statusbar button {
    display: flex;
    align-items: center;
    gap: 4px;
}

.statusbar .drop {
    margin: 0;
}

/* Taskbar */
.taskbar {
    display: flex;
    height: 40px;
    background: linear-gradient(90deg, #30204c, #261f42 30%, #231d3e);
    color: #fff;
}

.start {
    display: flex;
    align-items: center;
    justify-content: center;
    width: 48px;
}

.task-search {
    display: flex;
    align-items: center;
    gap: 10px;
    width: 344px;
    padding-left: 12px;
    border: 1px solid #bbb;
    background-color: #f2f2f2;
    color: #333;
}

.task-search input {
    flex: 1;
    font-size: 16px;
}

.task-search input::placeholder {
    color: #333;
}

.apps {
    display: flex;
    gap: 1px;
}

.app-icon {
    display: flex;
    align-items: center;
    justify-content: center;
    width: 48px;
}

.app-icon:first-child {
    width: 50px;
}

.open {
    background: linear-gradient(#b58fe0, #b58fe0) center bottom / 40px 2px no-repeat;
}

.current-app {
    border-bottom: 2px solid #b58fe0;
    background-color: #514a68;
}

.ui-logo {
    width: 24px;
    height: 24px;
    background-color: #0a74c0;
    color: #fff;
    font-size: 18px;
    font-weight: bold;
    line-height: 23px;
}

.ui-logo.light {
    border: 2px solid #0a74c0;
    background-color: #fff;
    color: #0a74c0;
    line-height: 19px;
}

.badge-text {
    font-size: 11px;
    font-weight: bold;
    fill: #fff;
}

.tray {
    display: flex;
    align-items: center;
    gap: 8px;
    margin-left: auto;
    margin-right: 4px;
    padding-right: 12px;
    border-right: 1px solid #76718a;
}

.ime {
    font-size: 19px;
}

.clock {
    width: 74px;
    line-height: 18px;
    text-align: center;
}

.notice {
    margin-left: 6px;
}

/* Context menu */
.menu {
    position: absolute;
    left: 936px;
    top: 15px;
    display: flex;
    flex-direction: column;
    width: 219px;
    border: 1px solid #a0a0a0;
    border-radius: 2px;
    background-color: #fff;
    font-size: 13px;
    line-height: 18px;
}

.menu button {
    display: grid;
    grid-template-columns: 30px 1fr;
    align-items: center;
    justify-items: start;
    height: 23px;
    padding: 0 0 2px 5px;
    color: #222;
}

.menu button:not(.tall) {
    padding-left: 35px;
    grid-template-columns: 1fr auto;
}

.menu .tall {
    height: 24px;
}

.menu svg {
    margin-left: 2px;
}

.menu button:disabled {
    color: #aaa;
}

.menu .sub::after {
    content: "";
    margin-right: 4px;
    border: 4px solid transparent;
    border-left-color: #222;
    border-right: none;
}

.menu hr {
    width: 172px;
    height: 1px;
    margin: 0 5px 0 auto;
    border: none;
    background-color: #ddd;
}
```
